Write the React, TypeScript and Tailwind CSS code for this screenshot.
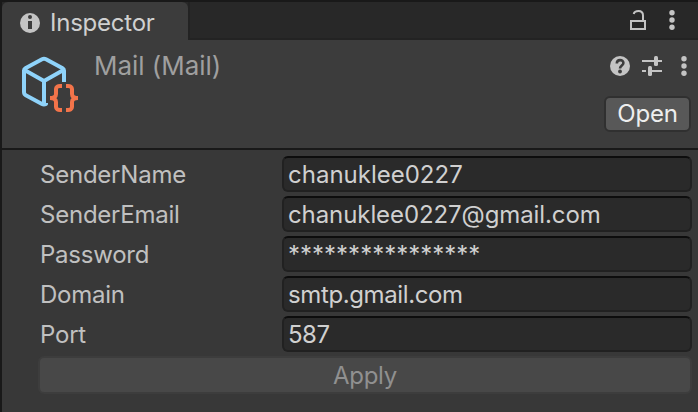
const fields = [
  { label: 'SenderName', value: 'chanuklee0227', spacing: 'tracking-[0px]' },
  { label: 'SenderEmail', value: 'chanuklee0227@gmail.com', spacing: 'tracking-[-0.09px]' },
  { label: 'Password', value: '****************', spacing: 'tracking-[0px]' },
  { label: 'Domain', value: 'smtp.gmail.com', spacing: 'tracking-[-0.38px]' },
  { label: 'Port', value: '587', spacing: 'tracking-[-0.5px]' },
];

function InfoIcon() {
  return (
    <svg className="h-5 w-5 shrink-0" viewBox="0 0 20 20">
      <circle cx="10" cy="10" r="10" fill="#c4c4c4" />
      <circle cx="10" cy="4" r="2" fill="#3c3c3c" />
      <path d="M8 8h4v8H8z" fill="#3c3c3c" />
    </svg>
  );
}

function LockIcon() {
  return (
    <svg className="h-5 w-4 shrink-0" viewBox="0 0 16 20" fill="none" stroke="#c4c4c4" strokeWidth="2">
      <path d="M1 11h14v8H1z" />
      <path d="M13 11V5.500C13 2.500 11 1 8.500 1S4.200 2 3.700 4" />
    </svg>
  );
}

function DotsIcon() {
  return (
    <svg className="h-5 w-[6px] shrink-0" viewBox="0 0 6 20" fill="#c4c4c4">
      <circle cx="3" cy="2.700" r="2.700" />
      <circle cx="3" cy="10" r="2.700" />
      <circle cx="3" cy="17.300" r="2.700" />
    </svg>
  );
}

function HelpIcon() {
  return (
    <svg className="h-5 w-5 shrink-0" viewBox="0 0 20 20">
      <circle cx="10" cy="10" r="10" fill="#c4c4c4" />
      <path d="M6.800 7.500C6.800 3 13.400 3.200 13.400 7c0 2.500-3.400 2.500-3.400 5.500" fill="none" stroke="#3c3c3c" strokeWidth="2.600" />
      <circle cx="10" cy="15.500" r="1.900" fill="#3c3c3c" />
    </svg>
  );
}

function PresetIcon() {
  return (
    <svg className="h-5 w-5 shrink-0" viewBox="0 0 20 20" fill="#c4c4c4">
      <path d="M0 4h12v2H0zM16 4h4v2h-4zM0 14h4v2H0zM10 14h10v2H10z" />
      <rect x="12" y="0" width="4" height="10" rx="1.500" />
      <rect x="6" y="10" width="4" height="10" rx="1.500" />
    </svg>
  );
}

function ScriptableIcon() {
  return (
    <svg className="h-[56px] w-[58px] shrink-0" viewBox="0 0 58 56" fill="none">
      <g stroke="#8fd3fa" strokeWidth="4" strokeLinejoin="round">
        <path d="M42 26V14.500c0-1-.5-1.800-1.400-2.300L24 3.200c-1.300-.7-2.700-.7-4 0L3.400 12.200C2.500 12.700 2 13.500 2 14.500V36c0 1.500.5 2.500 1.800 3.200L20 48c1.300.7 2.500.7 4 0v-1" />
        <path d="M2.500 14L22 25l19.500-11M22 25v23" />
      </g>
      <g stroke="#f3744a" strokeWidth="4">
        <path d="M40 30h-2c-2 0-4 1-4 3v5c0 2-1.500 4-6 4 4.500 0 6 2 6 4v5c0 2 2 3 4 3h2" />
        <path d="M44 30h2c2 0 4 1 4 3v5c0 2 1.500 4 6 4-4.500 0-6 2-6 4v5c0 2-2 3-4 3h-2" />
      </g>
    </svg>
  );
}

export default function App() {
  return (
    <div className="flex h-[412px] w-[698px] flex-col overflow-hidden border-l-2 border-t-2 border-[#191919] bg-[#383838] font-['Inter',sans-serif] text-2xl leading-[32px] text-[#c0c0c0]">
      <div className="flex h-[38px] shrink-0 bg-[#282828]">
        <div className="flex w-[186px] items-center gap-[10px] rounded-t-md bg-[#3c3c3c] pl-[18px] pt-[3px]">
          <InfoIcon />
          <span className="tracking-[-0.23px] text-[#d0d0d0]">Inspector</span>
        </div>
        <div className="flex flex-1 items-start justify-end gap-[23px] border-b-2 border-l-2 border-[#232323] pr-[23px] pt-2">
          <LockIcon />
          <DotsIcon />
        </div>
      </div>

      <header className="flex h-[110px] shrink-0 border-b-2 border-[#191919] bg-[#3c3c3c] pl-5">
        <div className="pt-4">
          <ScriptableIcon />
        </div>
        <h1 className="ml-[14px] mt-[10px] text-[26px] leading-[32px] tracking-[-0.03px] text-[#9f9f9f]">Mail (Mail)</h1>
        <div className="ml-auto flex flex-col items-end pt-4">
          <div className="flex gap-3 pr-[11px]">
            <HelpIcon />
            <PresetIcon />
            <span className="ml-[7px] flex">
              <DotsIcon />
            </span>
          </div>
          <button className="mr-[7px] mt-5 h-9 w-[87px] rounded-md border-2 border-[#303030] bg-[#585858] tracking-[-0.15px] text-[#eeeeee]">
            Open
          </button>
        </div>
      </header>

      <main className="flex flex-col pl-9 pr-[6px] pt-[6px]">
        <div className="flex flex-col gap-1">
          {fields.map(({ label, value, spacing }) => (
            <div key={label} className="flex h-9">
              <span className="w-[244px] pl-[2px] pt-[3px] tracking-[-0.23px]">{label}</span>
              <div className={`flex-1 rounded-md border-2 border-[#212121] border-t-[#0d0d0d] bg-[#2a2a2a] pl-1 pt-px text-[#d0d0d0] ${spacing}`}>
                {value}
              </div>
            </div>
          ))}
        </div>
        <button className="mt-1 h-[38px] rounded-md border-2 border-[#3d3d3d] bg-[#484848] pt-[2px] tracking-[-0.3px] text-[#909090]">
          Apply
        </button>
      </main>
    </div>
  );
}
